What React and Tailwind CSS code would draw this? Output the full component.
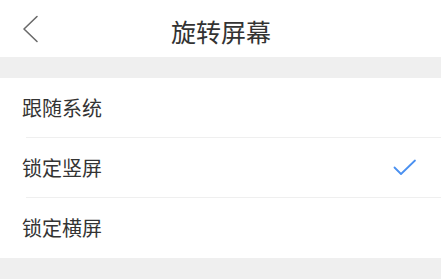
import React from "react";

const font = { fontFamily: '"Noto Sans CJK SC", "Noto Sans", sans-serif' };

function Row({ label, checked, border }) {
  return (
    <div className="h-[60px] pl-[26px] bg-white">
      <div className={`h-full flex items-center justify-between pr-[24px] ${border ? "border-b border-[#efefef]" : ""}`}>
        <span className="-ml-[4px] text-[20px] leading-none text-[#333333]">{label}</span>
        {checked && (
          <svg width="24" height="18" viewBox="0 0 24 18" fill="none">
            <path d="M1.5 8.5 L8 15 L22 1.5" stroke="#4a90f0" strokeWidth="1.8" strokeLinecap="round" strokeLinejoin="round" />
          </svg>
        )}
      </div>
    </div>
  );
}

export default function App() {
  return (
    <div className="w-[441px] h-[279px] bg-[#efefef] flex flex-col overflow-hidden" style={font}>
      <div className="h-[57px] bg-white flex items-center relative">
        <div className="pl-[22px] pt-[1px] flex items-center">
          <svg width="18" height="28" viewBox="0 0 18 28" fill="none">
            <path d="M15 1.5 L2 14 L15 26.5" stroke="#6a6a6a" strokeWidth="1.6" strokeLinecap="round" strokeLinejoin="round" />
          </svg>
        </div>
        <div className="absolute inset-0 flex items-center justify-center pt-[6px] pl-[1px]">
          <span className="text-[25px] leading-none text-[#333333]">旋转屏幕</span>
        </div>
      </div>
      <div className="h-[21px]" />
      <Row label="跟随系统" border />
      <Row label="锁定竖屏" checked border />
      <Row label="锁定横屏" />
    </div>
  );
}
